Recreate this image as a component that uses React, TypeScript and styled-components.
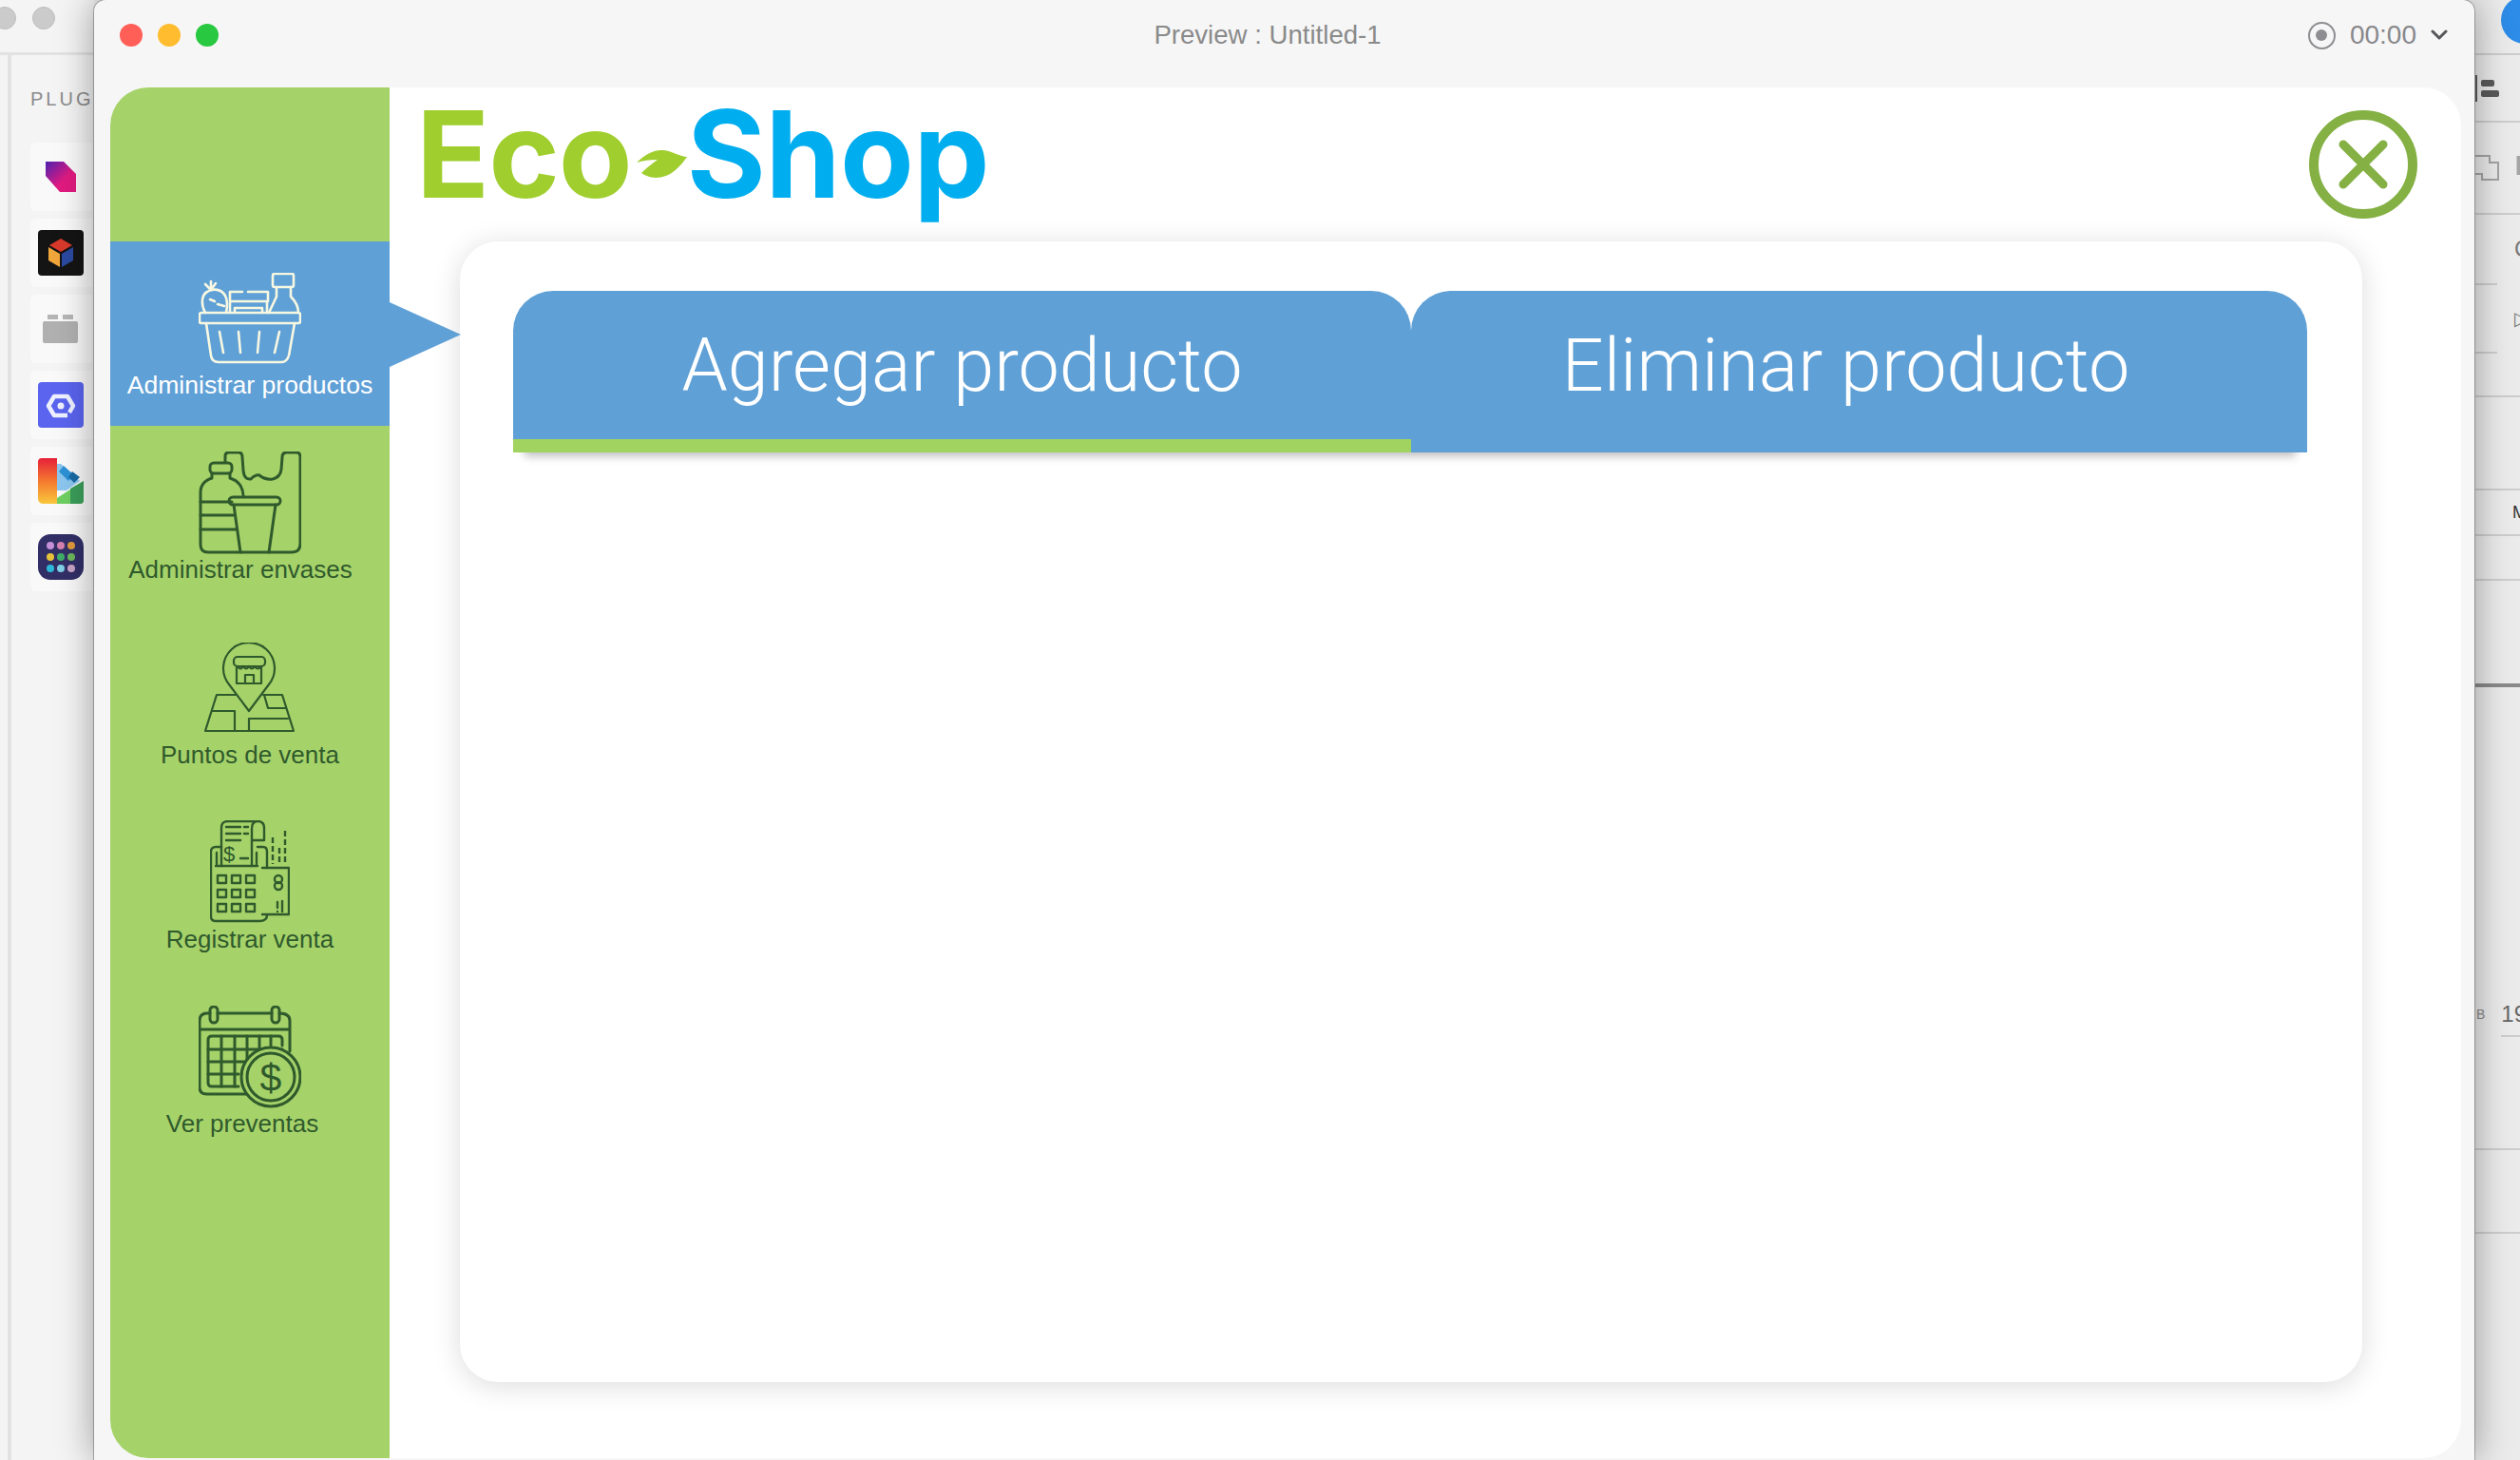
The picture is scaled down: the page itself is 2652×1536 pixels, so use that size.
import React from "react";
import styled, { createGlobalStyle } from "styled-components";

const GlobalStyle = createGlobalStyle`
    html, body {
        margin: 0;
        padding: 0;
        overflow: hidden;
        background: #ececec;
        font-family: "Liberation Sans", Arial, sans-serif;
    }
`;

const Screen = styled.div`
    display: grid;
    grid-template-columns: 99px 2505px 48px;
    width: 2652px;
    height: 1536px;
    overflow: hidden;
`;

/* ---------- backdrop, left ---------- */
const LeftStrip = styled.div`
    display: flex;
    flex-direction: column;
    background: #f4f4f4;
    overflow: hidden;
`;
const HostToolbar = styled.div`
    display: flex;
    align-items: center;
    gap: 17px;
    height: 58px;
    padding: 0 0 18px 0;
    margin-left: -7px;
    box-sizing: border-box;
    border-bottom: 3px solid #e2e2e2;
    flex: none;
`;
const HostDot = styled.span`
    width: 24px;
    height: 24px;
    border-radius: 50%;
    background: #cbcbcb;
    border: 1px solid #bdbdbd;
    box-sizing: border-box;
    flex: none;
`;
const PluginPanel = styled.div`
    flex: 1;
    margin-left: 8px;
    padding: 32px 0 0 20px;
    border-left: 4px solid #e2e2e2;
`;
const PanelTitle = styled.div`
    font-size: 20px;
    letter-spacing: 3px;
    line-height: 28px;
    color: #8b8b8b;
    white-space: nowrap;
`;
const PluginList = styled.div`
    display: flex;
    flex-direction: column;
    gap: 8px;
    margin-top: 32px;
`;
const PluginTile = styled.div`
    display: flex;
    align-items: center;
    width: 100px;
    height: 72px;
    padding-left: 8px;
    box-sizing: border-box;
    background: #f9f9f9;
    border-radius: 6px;
`;

/* ---------- preview window ---------- */
const PreviewWindow = styled.div`
    position: relative;
    z-index: 2;
    display: flex;
    flex-direction: column;
    background: #f6f6f6;
    border-radius: 12px 12px 0 0;
    box-shadow: 0 0 38px rgba(0, 0, 0, 0.38), 0 0 0 1px #b4b4b4;
`;
const TitleBar = styled.div`
    display: grid;
    grid-template-columns: 1fr auto 1fr;
    align-items: center;
    height: 92px;
    padding: 0 28px 18px 27px;
    box-sizing: border-box;
    flex: none;
`;
const Lights = styled.div`
    display: flex;
    gap: 16px;
`;
const Light = styled.span<{ $color: string }>`
    width: 24px;
    height: 24px;
    border-radius: 50%;
    background: ${props => props.$color};
`;
const WindowTitle = styled.div`
    font-size: 27.6px;
    color: #8a8a8a;
    padding-right: 34px;
`;
const Timer = styled.div`
    display: flex;
    align-items: center;
    justify-content: flex-end;
    gap: 15px;
    font-size: 28px;
    color: #88888c;
`;
const RecordRing = styled.span`
    display: flex;
    align-items: center;
    justify-content: center;
    width: 29px;
    height: 29px;
    box-sizing: border-box;
    border: 2px solid #8e8e92;
    border-radius: 50%;
    &::after {
        content: "";
        width: 12px;
        height: 12px;
        border-radius: 50%;
        background: #8e8e92;
    }
`;
const AppFrame = styled.div`
    flex: 1;
    display: flex;
    margin: 0 14px 2px 17px;
    background: #ffffff;
    border-radius: 40px;
`;

/* ---------- sidebar ---------- */
const Sidebar = styled.nav`
    position: relative;
    width: 294px;
    flex: none;
    padding-top: 162px;
    box-sizing: border-box;
    background: #a6d26a;
    border-radius: 40px 0 0 40px;
`;
const NavItem = styled.div<{ $active?: boolean }>`
    position: relative;
    display: flex;
    flex-direction: column;
    align-items: center;
    height: 194.3px;
    padding-top: 25px;
    box-sizing: border-box;
    background: ${props => (props.$active ? "#5fa0d6" : "transparent")};
    color: ${props => (props.$active ? "#ffffff" : "#2f5a2c")};
`;
const NavIcon = styled.div`
    display: flex;
    align-items: center;
    justify-content: center;
    height: 111px;
`;
const NavLabel = styled.div<{ $shift?: number; $large?: boolean }>`
    font-size: ${props => (props.$large ? 26.6 : 26)}px;
    line-height: 30px;
    white-space: nowrap;
    margin-right: ${props => props.$shift || 0}px;
`;
const Pointer = styled.span`
    position: absolute;
    left: 294px;
    top: 64px;
    width: 0;
    height: 0;
    border-top: 34px solid transparent;
    border-bottom: 34px solid transparent;
    border-left: 75px solid #5fa0d6;
`;

/* ---------- main area ---------- */
const Main = styled.main`
    flex: 1;
    display: flex;
    flex-direction: column;
    padding: 0 104px 80px 74px;
    min-width: 0;
`;
const Header = styled.header`
    position: relative;
    display: flex;
    align-items: flex-start;
    justify-content: space-between;
    height: 162px;
    margin: 0 -104px 0 -43px;
    padding: 0 46px 0 0;
    flex: none;
`;
const Logo = styled.div`
    display: flex;
    align-items: baseline;
    font-family: "Inter", sans-serif;
    font-weight: 700;
    font-size: 127px;
    line-height: 150px;
    margin: -5px 0 0 -3px;
`;
const LogoEco = styled.span`
    color: #a0ce2e;
    letter-spacing: -1px;
`;
const LogoShop = styled.span`
    color: #00aeef;
    letter-spacing: -0.5px;
`;
const LogoLeaf = styled.svg`
    width: 53px;
    height: 30px;
    margin: 0 0 0 5px;
    transform: translateY(-21px);
`;
const CloseButton = styled.svg`
    width: 114px;
    height: 114px;
    margin-top: 24px;
`;
const Card = styled.section`
    flex: 1;
    padding: 52px 58px 0 56px;
    background: #ffffff;
    border-radius: 40px;
    box-shadow: 0 4px 30px rgba(0, 0, 0, 0.14);
`;
const Tabs = styled.div`
    display: grid;
    grid-template-columns: 945px 943px;
    box-shadow: 0 16px 9px -12px rgba(0, 0, 0, 0.26);
`;
const Tab = styled.div<{ $active?: boolean }>`
    display: flex;
    align-items: center;
    justify-content: center;
    height: 170px;
    padding: ${props => (props.$active ? "1px 0 0" : "0 28px 14px 0")};
    box-sizing: border-box;
    background: #5fa0d6;
    border-radius: 42px 42px 0 0;
    border-bottom: ${props => (props.$active ? "14px solid #a0d35f" : "none")};
    font-family: "Roboto", sans-serif;
    font-weight: 300;
    font-size: 77.3px;
    color: #ffffff;
`;

/* ---------- backdrop, right ---------- */
const RightStrip = styled.div`
    display: flex;
    flex-direction: column;
    background: #ebebeb;
    overflow: hidden;
`;
const StripRow = styled.div<{ $h: number }>`
    display: flex;
    flex-direction: column;
    height: ${props => props.$h}px;
    flex: none;
`;
const RowBody = styled.div<{ $bottom?: boolean }>`
    flex: 1;
    display: flex;
    align-items: ${props => (props.$bottom ? "flex-end" : "center")};
    padding-bottom: ${props => (props.$bottom ? "8px" : "0")};
    min-height: 0;
    white-space: nowrap;
`;
const RowLine = styled.div<{ $left?: number; $width?: number; $dark?: boolean }>`
    height: ${props => (props.$dark ? 4 : 2)}px;
    margin-left: ${props => props.$left || 0}px;
    width: ${props => (props.$width ? `${props.$width}px` : "auto")};
    background: ${props => (props.$dark ? "#8a8a8a" : "#cdcdcd")};
    flex: none;
`;
const Avatar = styled.span`
    width: 50px;
    height: 50px;
    margin: -14px 0 0 28px;
    border-radius: 50%;
    background: #2d8ce8;
    flex: none;
`;
const RowGlyph = styled.span<{ $left: number; $size: number; $color?: string }>`
    margin-left: ${props => props.$left}px;
    font-size: ${props => props.$size}px;
    line-height: 28px;
    color: ${props => props.$color || "#777777"};
`;
const AlignBars = styled.svg`
    width: 26px;
    height: 28px;
`;
const StackedSquares = styled.svg`
    width: 48px;
    height: 30px;
`;

const BasketIcon = () => (
    <svg width="108" height="96" viewBox="0 0 108 96" fill="none" stroke="#f8f8e2" strokeWidth="2.6" strokeLinecap="round" strokeLinejoin="round">
        <rect x="1" y="42" width="106" height="11" rx="2" />
        <path d="M8 53 L13 87 Q14 94 21 94 L87 94 Q93 94 95 87 L101 53" />
        <path d="M22 62 L26 84 M42 62 L44 84 M64 62 L62 84 M85 62 L80 84" />
        <path d="M7 42 C3 35 2 24 9 20 C15 16 24 17 28 24 C31 30 30 37 29 42" />
        <path d="M13 18 L13 9 M13 18 L7 12 M13 18 L18 11" />
        <path d="M12 28 L17 30 M20 33 L27 35" />
        <path d="M33 30 L33 20 L46 20 M52 20 L73 20 L73 30 M33 30 L72 30 M33 42 L33 30 M72 42 L72 30 M38 42 L38 37 L67 37 L67 42" />
        <rect x="78" y="1" width="22" height="14" rx="2" />
        <path d="M82 15 L82 25 L74 42 M97 15 L97 25 Q105 33 105 42" />
    </svg>
);

const EnvasesIcon = () => (
    <svg width="108" height="108" viewBox="0 0 108 108" fill="none" stroke="#2f5a2c" strokeWidth="3" strokeLinecap="round" strokeLinejoin="round">
        <path d="M28 11 L28 5 Q28 1 32 1 L42 1 Q46 1 46 6 L47 20 Q48 30 55 29 Q60 24 64 25 Q70 30 78 29 Q86 27 87 19 L88 6 Q88 1 93 1 L103 1 Q107 1 107 6 L107 97 Q107 106 98 106 L10 106 Q2 106 2 98 L2 43 Q2 32 14 28 L14 23" />
        <rect x="12" y="12" width="23" height="11" rx="4" />
        <path d="M33 23 L33 28 Q46 32 47 46" />
        <path d="M2 53 L35 53 M2 67 L38 67 M2 82 L40 82" />
        <rect x="32" y="48" width="54" height="8" rx="4" />
        <path d="M37 56 L44 106 M81 56 L74 106" />
    </svg>
);

const MapPinIcon = () => (
    <svg width="96" height="95" viewBox="0 0 96 95" fill="none" stroke="#2f5a2c" strokeWidth="2.2" strokeLinecap="round" strokeLinejoin="round">
        <path d="M47 72 L26 44 A27 27 0 1 1 68 44 Z" />
        <path d="M33 55 L13 55 L1 93 L94 93 L82 55 L62 55" />
        <path d="M8 72 L32 72 L32 93 M63 55 L67 69 L86 69 M47 93 L47 80 L88 80" />
        <rect x="31" y="15" width="33" height="10" rx="4" />
        <path d="M34 26 L34 43 L60 43 L60 26 M43 43 L43 34 L52 34 L52 43" />
        <path d="M35 25 Q38 30 41 25 Q44 30 47 25 Q50 30 53 25 Q56 30 60 25" />
    </svg>
);

const TerminalIcon = () => (
    <svg width="84" height="108" viewBox="0 0 84 108" fill="none" stroke="#2f5a2c" strokeWidth="2.4" strokeLinecap="round" strokeLinejoin="round">
        <path d="M12 28 L6 28 Q1 28 1 33 L1 101 Q1 106 6 106 L52 106 Q60 106 60 100" />
        <path d="M50 28 L56 28 Q60 28 60 33 L60 50" />
        <path d="M7 48 L7 34 M49 48 L49 34 M6 48 L50 48" />
        <path d="M12 48 L12 8 Q12 1 19 1 L50 1 Q57 1 57 8 L57 21 L45 21 M44 9 L44 48 M50 1 Q44 1 44 9" />
        <path d="M17 7 L32 7 M17 14 L32 14 M17 21 L32 21 M36 7 L40 7 M36 14 L40 14 M32 40 L40 40" />
        <text x="14" y="43" fontFamily="Liberation Sans, sans-serif" fontSize="22" fill="#2f5a2c" stroke="none">$</text>
        <rect x="8" y="58" width="9" height="8" />
        <rect x="23" y="58" width="9" height="8" />
        <rect x="38" y="58" width="9" height="8" />
        <rect x="8" y="73" width="9" height="8" />
        <rect x="23" y="73" width="9" height="8" />
        <rect x="38" y="73" width="9" height="8" />
        <rect x="8" y="88" width="9" height="8" />
        <rect x="23" y="88" width="9" height="8" />
        <rect x="38" y="88" width="9" height="8" />
        <path d="M55 50 L83 50 L83 99 L55 99" />
        <circle cx="72" cy="62" r="4" />
        <circle cx="72" cy="69" r="4" />
        <path d="M71 86 L71 92 M71 96 L71 96 M76 85 L76 96" />
        <path d="M66 18 L66 46 M73 29 L73 46 M79 11 L79 46" strokeDasharray="6 3" strokeLinecap="butt" />
    </svg>
);

const CalendarIcon = () => (
    <svg width="108" height="108" viewBox="0 0 108 108" fill="none" stroke="#2f5a2c" strokeWidth="3" strokeLinecap="round" strokeLinejoin="round">
        <path d="M12 8 L9 8 Q1 8 1 16 L1 86 Q1 93 9 93 L50 93" />
        <path d="M20 8 L77 8 M85 8 Q96 8 96 16 L96 48 M1 25 L96 25" />
        <rect x="12" y="1" width="8" height="17" rx="4" />
        <rect x="77" y="1" width="8" height="17" rx="4" />
        <path d="M14 32 L84 32 Q88 32 88 36 L88 42 M14 32 Q10 32 10 36 L10 81 Q10 85 14 85 L42 85" />
        <path d="M10 46 L88 46 M10 59 L48 59 M10 72 L42 72" />
        <path d="M24 32 L24 85 M38 32 L38 85 M51 32 L51 56 M64 32 L64 44 M76 32 L76 42" />
        <circle cx="76" cy="75" r="31" fill="#a6d26a" />
        <circle cx="76" cy="75" r="25" />
        <text x="76" y="90" textAnchor="middle" fontFamily="Liberation Sans, sans-serif" fontSize="41" fill="#2f5a2c" stroke="none">$</text>
    </svg>
);

const App: React.FC = () => {
    return (
        <Screen>
            <GlobalStyle />
            <LeftStrip>
                <HostToolbar>
                    <HostDot />
                    <HostDot />
                </HostToolbar>
                <PluginPanel>
                    <PanelTitle>PLUGINS</PanelTitle>
                    <PluginList>
                        <PluginTile>
                            <svg width="48" height="48" viewBox="0 0 48 48">
                                <defs>
                                    <linearGradient id="plugA" x1="0" y1="0" x2="1" y2="1">
                                        <stop offset="0" stopColor="#4d22b0" />
                                        <stop offset="0.6" stopColor="#e01a80" />
                                    </linearGradient>
                                </defs>
                                <path d="M8 8 L27 8 L40 21 L40 40 L23 40 L8 23 Z" fill="url(#plugA)" />
                            </svg>
                        </PluginTile>
                        <PluginTile>
                            <svg width="48" height="48" viewBox="0 0 48 48">
                                <rect width="48" height="48" rx="4" fill="#141414" />
                                <path d="M24 9 L36 16 L24 23 L12 16 Z" fill="#d8392b" />
                                <path d="M11 18 L23 25 L23 39 L11 32 Z" fill="#f0a63a" />
                                <path d="M37 18 L25 25 L25 39 L37 32 Z" fill="#2b4aa0" />
                            </svg>
                        </PluginTile>
                        <PluginTile>
                            <svg width="48" height="48" viewBox="0 0 48 48">
                                <rect x="10" y="9" width="11" height="5" fill="#b5b5b5" />
                                <rect x="26" y="9" width="11" height="5" fill="#b5b5b5" />
                                <rect x="5" y="16" width="37" height="23" rx="2" fill="#b0b0b0" />
                            </svg>
                        </PluginTile>
                        <PluginTile>
                            <svg width="48" height="48" viewBox="0 0 48 48">
                                <rect width="48" height="48" rx="4" fill="#5a64ee" />
                                <path d="M31 35 L17 35 L11 25 L17 15 L31 15 L37 25 L33 32" fill="none" stroke="#eef0ff" strokeWidth="4.5" strokeLinejoin="round" />
                                <circle cx="24" cy="25" r="3.5" fill="#eef0ff" />
                            </svg>
                        </PluginTile>
                        <PluginTile>
                            <svg width="48" height="48" viewBox="0 0 48 48">
                                <defs>
                                    <linearGradient id="plugE" x1="0" y1="0" x2="0" y2="1">
                                        <stop offset="0" stopColor="#e6203a" />
                                        <stop offset="0.5" stopColor="#f5792f" />
                                        <stop offset="1" stopColor="#f9c83c" />
                                    </linearGradient>
                                </defs>
                                <path d="M4 0 L20 0 L20 48 L6 48 Q0 48 0 42 L0 4 Q0 0 4 0 Z" fill="url(#plugE)" />
                                <path d="M20 6 L24 6 L44 24 L30 34 L20 34 Z" fill="#8cc6ee" />
                                <path d="M27 8 L38 18 L32 24 L22 14 Z" fill="#2c92d6" />
                                <path d="M36 14 L44 20 L38 26 L32 20 Z" fill="#1a6aa6" />
                                <path d="M20 48 L20 42 L48 24 L48 44 Q48 48 44 48 Z" fill="#6fcf62" />
                                <path d="M34 48 L34 32 L48 24 L48 44 Q48 48 44 48 Z" fill="#3b9e5a" />
                            </svg>
                        </PluginTile>
                        <PluginTile>
                            <svg width="48" height="48" viewBox="0 0 48 48">
                                <rect width="48" height="48" rx="13" fill="#312f66" />
                                <circle cx="13" cy="12" r="4" fill="#c690d8" />
                                <circle cx="24" cy="12" r="4" fill="#d480b0" />
                                <circle cx="35" cy="12" r="4" fill="#e09a3c" />
                                <circle cx="13" cy="24" r="4" fill="#e6c23a" />
                                <circle cx="24" cy="24" r="4" fill="#3fae68" />
                                <circle cx="35" cy="24" r="4" fill="#6db85a" />
                                <circle cx="13" cy="36" r="4" fill="#2cb8d8" />
                                <circle cx="24" cy="36" r="4" fill="#7fd0e6" />
                                <circle cx="35" cy="36" r="4" fill="#c8a4c8" />
                            </svg>
                        </PluginTile>
                    </PluginList>
                </PluginPanel>
            </LeftStrip>

            <PreviewWindow>
                <TitleBar>
                    <Lights>
                        <Light $color="#ff5f57" />
                        <Light $color="#febc2e" />
                        <Light $color="#28c840" />
                    </Lights>
                    <WindowTitle>Preview : Untitled-1</WindowTitle>
                    <Timer>
                        <RecordRing />
                        <span>00:00</span>
                        <svg width="18" height="12" viewBox="0 0 18 12" fill="none" stroke="#55555a" strokeWidth="3" strokeLinecap="round" strokeLinejoin="round">
                            <path d="M2 2 L9 9 L16 2" />
                        </svg>
                    </Timer>
                </TitleBar>
                <AppFrame>
                    <Sidebar>
                        <NavItem $active>
                            <NavIcon><BasketIcon /></NavIcon>
                            <NavLabel $large>Administrar productos</NavLabel>
                            <Pointer />
                        </NavItem>
                        <NavItem>
                            <NavIcon><EnvasesIcon /></NavIcon>
                            <NavLabel $shift={20}>Administrar envases</NavLabel>
                        </NavItem>
                        <NavItem>
                            <NavIcon><MapPinIcon /></NavIcon>
                            <NavLabel>Puntos de venta</NavLabel>
                        </NavItem>
                        <NavItem>
                            <NavIcon><TerminalIcon /></NavIcon>
                            <NavLabel>Registrar venta</NavLabel>
                        </NavItem>
                        <NavItem>
                            <NavIcon><CalendarIcon /></NavIcon>
                            <NavLabel $shift={16}>Ver preventas</NavLabel>
                        </NavItem>
                    </Sidebar>
                    <Main>
                        <Header>
                            <Logo>
                                <LogoEco>Eco</LogoEco>
                                <LogoLeaf viewBox="0 0 53 30">
                                    <path d="M0 14 C8 6 18 0 28 1 C38 2 46 8 53 8 C46 18 36 30 20 30 C14 30 8 27 5 25 C10 20 16 15 22 11 C14 11 6 12 0 14 Z" fill="#a0ce2e" />
                                </LogoLeaf>
                                <LogoShop>Shop</LogoShop>
                            </Logo>
                            <CloseButton viewBox="0 0 114 114" fill="none" stroke="#84b044" strokeLinecap="round">
                                <circle cx="57" cy="57" r="52" strokeWidth="10" />
                                <path d="M36 36 L78 78 M78 36 L36 78" strokeWidth="9" />
                            </CloseButton>
                        </Header>
                        <Card>
                            <Tabs>
                                <Tab $active>Agregar producto</Tab>
                                <Tab>Eliminar producto</Tab>
                            </Tabs>
                        </Card>
                    </Main>
                </AppFrame>
            </PreviewWindow>

            <RightStrip>
                <StripRow $h={58}>
                    <RowBody><Avatar /></RowBody>
                    <RowLine />
                </StripRow>
                <StripRow $h={71}>
                    <RowBody>
                        <AlignBars viewBox="0 0 26 28">
                            <rect x="0" y="0" width="3" height="28" fill="#5a5a5a" />
                            <rect x="7" y="5" width="14" height="7" rx="2" fill="#5a5a5a" />
                            <rect x="7" y="16" width="19" height="7" rx="2" fill="#5a5a5a" />
                        </AlignBars>
                    </RowBody>
                    <RowLine />
                </StripRow>
                <StripRow $h={97}>
                    <RowBody>
                        <StackedSquares viewBox="0 0 48 30" fill="none" stroke="#a4a4a4" strokeWidth="2">
                            <path d="M0 2 L16 2 L16 9 L25 9 L25 27 L8 27 L8 21 L0 21" />
                            <path d="M47 2 L47 22" strokeWidth="5" />
                        </StackedSquares>
                    </RowBody>
                    <RowLine />
                </StripRow>
                <StripRow $h={74}>
                    <RowBody><RowGlyph $left={42} $size={24}>C</RowGlyph></RowBody>
                    <RowLine $width={24} />
                </StripRow>
                <StripRow $h={72}>
                    <RowBody><RowGlyph $left={42} $size={20}>▷</RowGlyph></RowBody>
                    <RowLine $width={24} />
                </StripRow>
                <StripRow $h={46}>
                    <RowBody />
                    <RowLine />
                </StripRow>
                <StripRow $h={98}>
                    <RowBody />
                    <RowLine />
                </StripRow>
                <StripRow $h={48}>
                    <RowBody><RowGlyph $left={40} $size={18} $color="#333333">M</RowGlyph></RowBody>
                    <RowLine />
                </StripRow>
                <StripRow $h={47}>
                    <RowBody />
                    <RowLine />
                </StripRow>
                <StripRow $h={112}>
                    <RowBody />
                    <RowLine $dark />
                </StripRow>
                <StripRow $h={368}>
                    <RowBody $bottom>
                        <RowGlyph $left={2} $size={14} $color="#8a8a8a">B</RowGlyph>
                        <RowGlyph $left={17} $size={24} $color="#666666">19</RowGlyph>
                    </RowBody>
                    <RowLine $left={28} />
                </StripRow>
                <StripRow $h={119}>
                    <RowBody />
                    <RowLine />
                </StripRow>
                <StripRow $h={88}>
                    <RowBody />
                    <RowLine />
                </StripRow>
            </RightStrip>
        </Screen>
    );
};

export default App;
